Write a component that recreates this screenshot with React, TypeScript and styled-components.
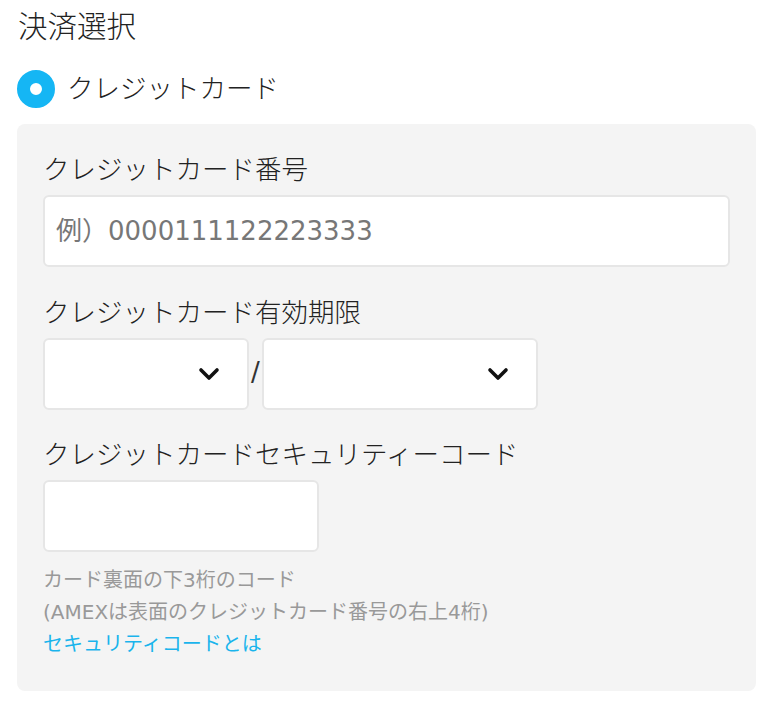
import React from "react";
import styled, { createGlobalStyle } from "styled-components";

const GlobalStyle = createGlobalStyle`
  html, body { margin: 0; padding: 0; background: #ffffff; }
  body {
    font-family: "DejaVu Sans", "Noto Sans CJK JP", sans-serif;
    color: #222222;
  }
  *, *::before, *::after { box-sizing: border-box; }
`;

const Page = styled.div`
  width: 775px;
  padding: 8px 19px 0 17px;
`;

const Title = styled.h2`
  margin: 0;
  padding-left: 1px;
  font-size: 29.5px;
  font-weight: 300;
  line-height: 38px;
  color: #222222;
`;

const RadioRow = styled.label`
  display: flex;
  align-items: center;
  gap: 12px;
  height: 38px;
  margin-top: 24px;
`;

const RadioDot = styled.span<{ $checked: boolean }>`
  width: 38px;
  height: 38px;
  border-radius: 50%;
  border: 13px solid ${(p) => (p.$checked ? "#15b6f4" : "#cccccc")};
  background: #ffffff;
  flex: none;
`;

const RadioText = styled.span`
  font-size: 26.5px;
  font-weight: 300;
  line-height: 38px;
  color: #222222;
`;

const Panel = styled.section`
  margin-top: 16px;
  background: #f4f4f4;
  border-radius: 8px;
  padding: 28px 26px 31px 26px;
`;

const Field = styled.div<{ $first?: boolean; $gap?: number }>`
  margin-top: ${(p) => (p.$first ? 0 : p.$gap ?? 28)}px;
`;

const FieldLabel = styled.div`
  font-size: 26.5px;
  font-weight: 300;
  line-height: 36px;
  margin-bottom: 7px;
  color: #222222;
`;

const TextInput = styled.input<{ $width?: number }>`
  display: block;
  width: ${(p) => (p.$width ? `${p.$width}px` : "100%")};
  height: 72px;
  border: 2px solid #e6e6e6;
  border-radius: 6px;
  background: #ffffff;
  padding: 0 11px;
  font-family: inherit;
  font-size: 26px;
  color: #222222;
  outline: none;
  &::placeholder {
    color: #777777;
  }
`;

const ExpiryRow = styled.div`
  display: flex;
  align-items: center;
`;

const SelectBox = styled.div<{ $width: number }>`
  width: ${(p) => p.$width}px;
  height: 72px;
  border: 2px solid #e6e6e6;
  border-radius: 6px;
  background: #ffffff;
  display: flex;
  align-items: center;
  justify-content: flex-end;
  padding-right: 27px;
`;

const Slash = styled.span`
  width: 13px;
  text-align: center;
  font-size: 26px;
  line-height: 30px;
  margin-top: -4px;
  color: #333333;
`;

const HelpText = styled.div`
  margin-top: 12px;
  font-size: 20px;
  line-height: 32px;
  color: #999999;
`;

const HelpLink = styled.a`
  color: #1ab4ec;
  text-decoration: none;
`;

const Chevron = () => (
  <svg width="22" height="14" viewBox="0 0 22 14" fill="none">
    <path
      d="M3 3 L11 11 L19 3"
      stroke="#111111"
      strokeWidth="3.6"
      strokeLinecap="round"
      strokeLinejoin="round"
    />
  </svg>
);

export default function App() {
  return (
    <>
      <GlobalStyle />
      <Page>
        <Title>決済選択</Title>
        <RadioRow>
          <RadioDot $checked />
          <RadioText>クレジットカード</RadioText>
        </RadioRow>
        <Panel>
          <Field $first>
            <FieldLabel>クレジットカード番号</FieldLabel>
            <TextInput placeholder="例）0000111122223333" />
          </Field>
          <Field>
            <FieldLabel>クレジットカード有効期限</FieldLabel>
            <ExpiryRow>
              <SelectBox $width={206}>
                <Chevron />
              </SelectBox>
              <Slash>/</Slash>
              <SelectBox $width={276}>
                <Chevron />
              </SelectBox>
            </ExpiryRow>
          </Field>
          <Field $gap={27}>
            <FieldLabel>クレジットカードセキュリティーコード</FieldLabel>
            <TextInput $width={276} />
          </Field>
          <HelpText>
            カード裏面の下3桁のコード
            <br />
            (AMEXは表面のクレジットカード番号の右上4桁)
            <br />
            <HelpLink href="#">セキュリティコードとは</HelpLink>
          </HelpText>
        </Panel>
      </Page>
    </>
  );
}
